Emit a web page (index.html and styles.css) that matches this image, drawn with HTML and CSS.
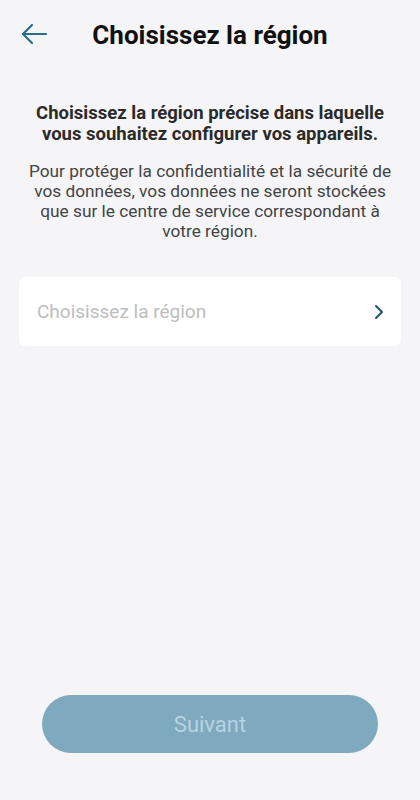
FILE: index.html
```html
<!DOCTYPE html>
<html lang="fr">
<head>
    <meta charset="UTF-8">
    <meta name="viewport" content="width=device-width, initial-scale=1.0">
    <title>Choisissez la région</title>
    <link rel="stylesheet" href="styles.css">
</head>
<body>
    <div class="page">
        <header class="topbar">
            <button class="back" aria-label="Retour">
                <svg width="28" height="24" viewBox="0 0 28 24" fill="none" stroke="#2b6c86" stroke-width="2.2" stroke-linecap="round" stroke-linejoin="round">
                    <path d="M26 12H3"/>
                    <path d="M12 3L3 12l9 9"/>
                </svg>
            </button>
            <h1>Choisissez la région</h1>
        </header>

        <p class="lead">Choisissez la région précise dans laquelle vous souhaitez configurer vos appareils.</p>
        <p class="info">Pour protéger la confidentialité et la sécurité de vos données, vos données ne seront stockées que sur le centre de service correspondant à votre région.</p>

        <div class="select">
            <span class="placeholder">Choisissez la région</span>
            <svg width="12" height="18" viewBox="0 0 12 18" fill="none" stroke="#24506a" stroke-width="2" stroke-linecap="round" stroke-linejoin="round">
                <path d="M3 3l6 6-6 6"/>
            </svg>
        </div>

        <div class="spacer"></div>

        <button class="next" disabled>Suivant</button>
    </div>
</body>
</html>
```

FILE: styles.css
```css
body {
    margin: 0;
    background-color: #f5f5f7;
    font-family: Roboto, 'Liberation Sans', Arial, sans-serif;
    color: #222;
}
.page {
    display: flex;
    flex-direction: column;
    min-height: 800px;
    box-sizing: border-box;
    padding: 0 19px 47px;
}
.topbar {
    position: relative;
    height: 70px;
    display: flex;
    align-items: center;
    justify-content: center;
}
.back {
    position: absolute;
    left: 0;
    top: 22px;
    background: none;
    border: none;
    padding: 0;
    width: 30px;
    height: 26px;
}
.topbar h1 {
    margin: 0;
    font-size: 26px;
    font-weight: bold;
    color: #111;
}
.lead {
    margin: 33px 0 0;
    text-align: center;
    font-size: 18.5px;
    font-weight: bold;
    line-height: 21px;
    color: #2a2a2a;
}
.info {
    margin: 16px 0 0;
    text-align: center;
    font-size: 17.3px;
    line-height: 20px;
    color: #444;
}
.select {
    margin-top: 36px;
    height: 69px;
    background-color: #fff;
    border-radius: 6px;
    display: flex;
    align-items: center;
    justify-content: space-between;
    padding: 0 16px 0 18px;
}
.placeholder {
    font-size: 19px;
    color: #bdbdbd;
}
.spacer {
    flex: 1;
}
.next {
    margin: 0 23px;
    height: 58px;
    border: none;
    border-radius: 29px;
    background-color: #7fa9be;
    color: #b7d4e2;
    font-family: Roboto, 'Liberation Sans', Arial, sans-serif;
    font-size: 22px;
}
```
